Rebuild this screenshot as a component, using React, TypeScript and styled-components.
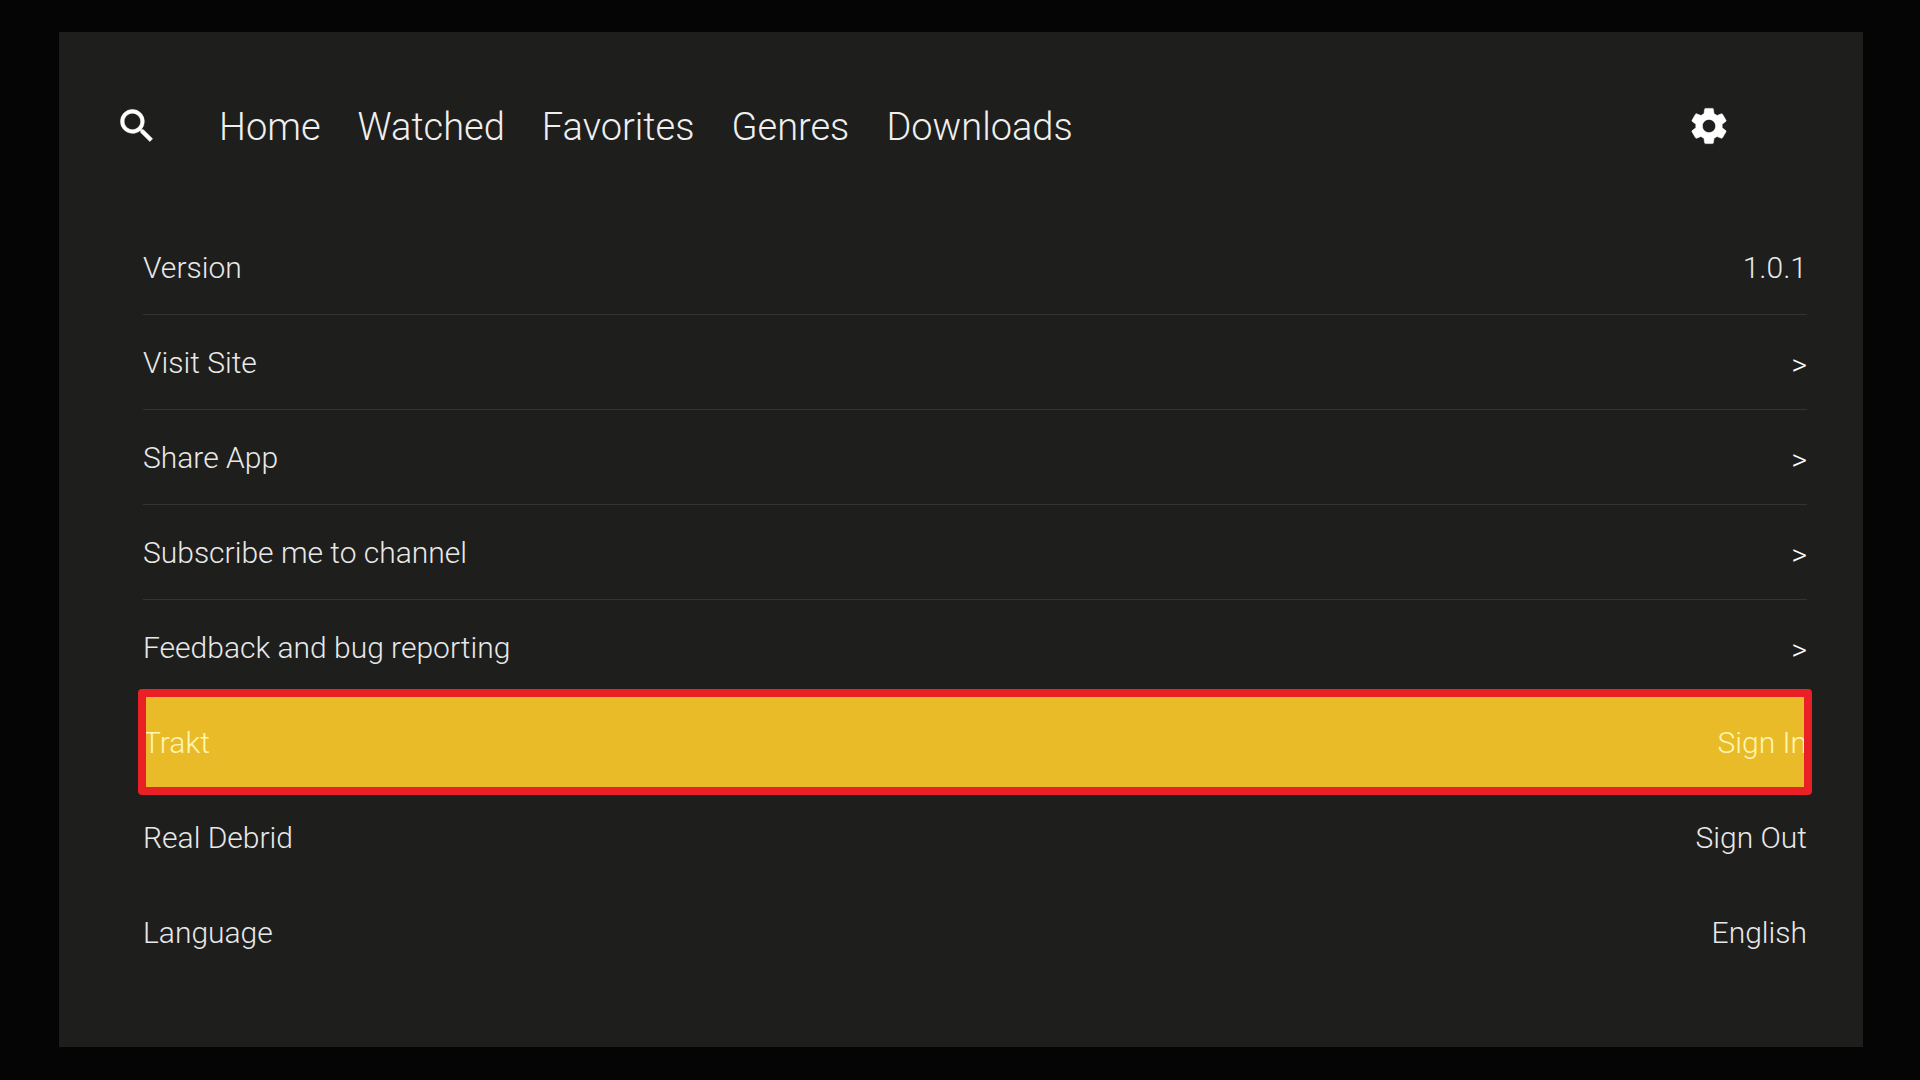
import React from "react";
import styled, { createGlobalStyle, css } from "styled-components";
import { MdSearch, MdSettings } from "react-icons/md";

const GlobalStyle = createGlobalStyle`
  * { box-sizing: border-box; }
  body {
    margin: 0;
    background: #050505;
    color: #e8e8e8;
    font-family: Roboto, "Liberation Sans", sans-serif;
    font-weight: 300;
  }
`;

const Screen = styled.div`
  display: flex;
  min-height: 100vh;
  padding: 32px 57px 33px 59px;
`;

const Panel = styled.main`
  display: flex;
  flex: 1;
  flex-direction: column;
  gap: 64px;
  padding: 64px 56px;
  background: #1e1e1d;
`;

const TopBar = styled.header`
  display: flex;
  align-items: center;
  height: 60px;
  padding-right: 76px;
`;

const IconButton = styled.button`
  display: flex;
  padding: 0;
  border: 0;
  background: none;
  color: #ffffff;
  font-size: 44px;
  cursor: pointer;

  path:not([fill="none"]) {
    stroke: currentColor;
    stroke-width: 0.3;
  }
`;

const Nav = styled.nav`
  display: flex;
  flex: 1;
  gap: 37px;
  margin-left: 60px;
  padding-top: 2px;
`;

const NavLink = styled.a`
  color: #efefef;
  font-size: 38px;
  line-height: 48px;
  text-decoration: none;
`;

const SettingsList = styled.ul`
  margin: 0;
  padding: 0 0 0 28px;
  list-style: none;
`;

const SettingsItem = styled.li<{ $divided: boolean }>`
  height: 95px;
  border-bottom: 1px solid ${(p) => (p.$divided ? "#343434" : "transparent")};
`;

const selectedRow = css`
  background: #eabb28;
  color: #fff6b4;

  &::after {
    content: "";
    position: absolute;
    inset: -6px -5px;
    border: 8px solid #e92025;
    border-radius: 4px;
    pointer-events: none;
  }
`;

const Row = styled.button<{ $selected: boolean }>`
  position: relative;
  display: flex;
  align-items: center;
  justify-content: space-between;
  width: 100%;
  height: 100%;
  padding: 2px 0 0;
  border: 0;
  background: none;
  color: inherit;
  font: inherit;
  font-size: 30px;
  line-height: 36px;
  text-align: left;
  cursor: pointer;
  ${(p) => p.$selected && selectedRow}
`;

const Chevron = styled.span`
  padding-top: 4px;
  color: #ffffff;
`;

type Setting = { label: string; value?: string; divided?: boolean; selected?: boolean };

const sections = ["Home", "Watched", "Favorites", "Genres", "Downloads"];

const settings: Setting[] = [
  { label: "Version", value: "1.0.1", divided: true },
  { label: "Visit Site", divided: true },
  { label: "Share App", divided: true },
  { label: "Subscribe me to channel", divided: true },
  { label: "Feedback and bug reporting" },
  { label: "Trakt", value: "Sign In", selected: true },
  { label: "Real Debrid", value: "Sign Out" },
  { label: "Language", value: "English" },
];

export default function App() {
  return (
    <Screen>
      <GlobalStyle />
      <Panel>
        <TopBar>
          <IconButton type="button" aria-label="Search">
            <MdSearch />
          </IconButton>
          <Nav>
            {sections.map((name) => (
              <NavLink key={name} href={`#${name.toLowerCase()}`}>
                {name}
              </NavLink>
            ))}
          </Nav>
          <IconButton type="button" aria-label="Settings">
            <MdSettings />
          </IconButton>
        </TopBar>
        <SettingsList>
          {settings.map(({ label, value, divided, selected }) => (
            <SettingsItem key={label} $divided={Boolean(divided)}>
              <Row type="button" $selected={Boolean(selected)}>
                <span>{label}</span>
                {value ? <span>{value}</span> : <Chevron>&gt;</Chevron>}
              </Row>
            </SettingsItem>
          ))}
        </SettingsList>
      </Panel>
    </Screen>
  );
}
